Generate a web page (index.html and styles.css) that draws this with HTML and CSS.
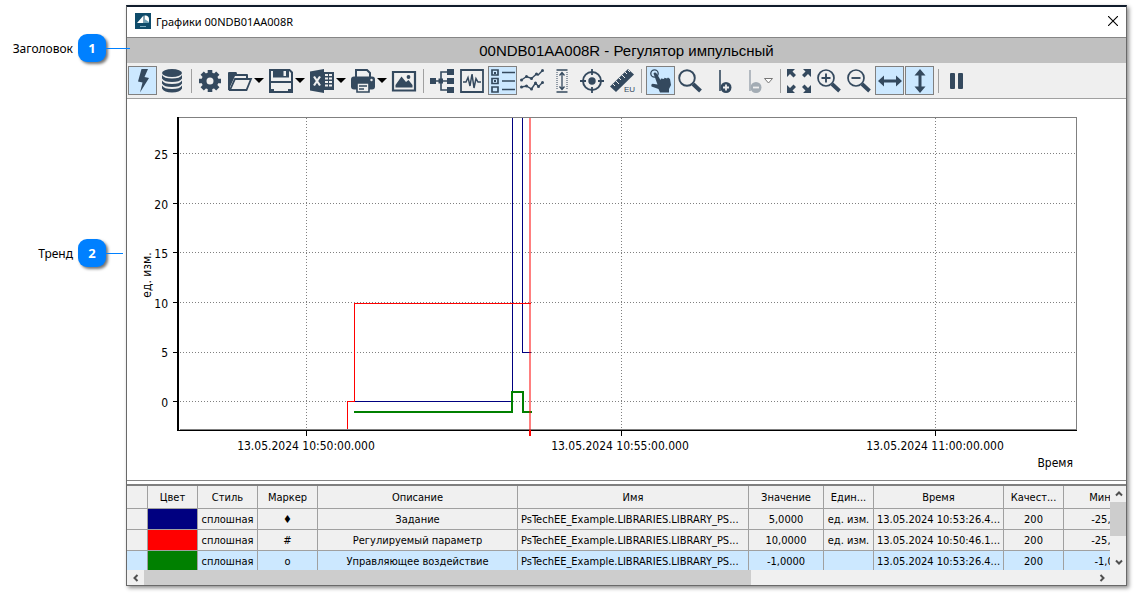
FILE: index.html
```html
<!DOCTYPE html>
<html lang="ru">
<head>
<meta charset="utf-8">
<title>Графики 00NDB01AA008R</title>
<link rel="stylesheet" href="styles.css">
</head>
<body>
<div class="page">
  <aside class="callouts">
    <div class="callout callout-header"><span class="callout-label">Заголовок</span><span class="badge">1</span><span class="leader leader-long"></span></div>
    <div class="callout callout-trend"><span class="callout-label">Тренд</span><span class="badge">2</span><span class="leader"></span></div>
  </aside>
  <main class="window">
    <header class="titlebar">
      <svg class="app-icon" viewBox="0 0 16 16"><rect width="16" height="16" fill="#0f4c6b"/><path d="M2 10L8.500 2.500V10ZM9.500 2.500H11Q14 3 14 6V10H9.500Z" fill="#fff"/><path d="M9.500 10V6L14 9V10Z" fill="#6fa3b8"/><path d="M5 13.500H11" stroke="#7fb0c4"/></svg>
      <span class="title">Графики 00NDB01AA008R</span>
      <button class="close" aria-label="Закрыть"><svg viewBox="0 0 10 10"><path d="M0 0L10 10M10 0L0 10" stroke="#000" stroke-width="1.100"/></svg></button>
    </header>
    <h1 class="heading">00NDB01AA008R - Регулятор импульсный</h1>
    <nav class="toolbar">
      <button class="tool pressed" aria-label="Онлайн"><svg class="icon" viewBox="0 0 24 24"><path d="M10.500 0H17L13.500 8L18 9L9 23.500L11.500 13.500L7 12.500Z"/></svg></button>
      <button class="tool" aria-label="Архив"><svg class="icon" viewBox="0 0 24 24"><ellipse cx="12" cy="4" rx="10" ry="4"/><path d="M2 6Q4 9.500 12 9.500T22 6V9.500Q20 13 12 13T2 9.500ZM2 11.500Q4 15 12 15T22 11.500V14.500Q20 18 12 18T2 14.500ZM2 16.500Q4 20 12 20T22 16.500V19.500Q20 23.500 12 23.500T2 19.500Z"/></svg></button>
      <i class="sep"></i>
      <button class="tool" aria-label="Настройки"><svg class="icon" viewBox="0 0 24 24"><circle cx="12" cy="12" r="6" fill="none" stroke="#34495e" stroke-width="5"/><path d="M12 1V5M12 19V23M1 12H5M19 12H23M4.200 4.200L7 7M17 17L19.800 19.800M4.200 19.800L7 17M17 7L19.800 4.200" stroke="#34495e" stroke-width="4.600" fill="none"/></svg></button>
      <button class="tool drop" aria-label="Открыть"><svg class="icon" viewBox="0 0 24 24"><path d="M0 21V4Q0 3 1 3H8Q9 3 9 5H19Q20 5 20 6V9H18V7H7L2 18V21Z"/><path d="M7 10H23L18.500 21H2Z" fill="#efefef" stroke="#34495e" stroke-width="1.800"/></svg><i class="arrow"></i></button>
      <button class="tool drop" aria-label="Сохранить"><svg class="icon" viewBox="0 0 24 24"><path d="M1 1H20.500L23 3.500V23H1Z" fill="#efefef" stroke="#34495e" stroke-width="2"/><path d="M4 0H20V8.500H4ZM1 12H23V14H1ZM1 20H5V24H1ZM19 20H23V24H19Z"/><path d="M14.500 2H17V7H14.500Z" fill="#efefef"/></svg><i class="arrow"></i></button>
      <button class="tool drop" aria-label="Экспорт в Excel"><svg class="icon" viewBox="0 0 24 24"><path d="M0 2.500L14 0V24L0 21.500ZM14 3H24V21H14Z"/><path d="M4 7.500L10 16.500M10 7.500L4 16.500" stroke="#efefef" stroke-width="2.200"/><path d="M15 5H18V7H15ZM19 5H22V7H19ZM15 8.500H18V10.500H15ZM19 8.500H22V10.500H19ZM15 12H18V14H15ZM19 12H22V14H19ZM15 15.500H18V17.500H15ZM19 15.500H22V17.500H19Z" fill="#efefef"/></svg><i class="arrow"></i></button>
      <button class="tool drop" aria-label="Печать"><svg class="icon" viewBox="0 0 24 24"><path d="M5 8V1H16L19 4V8" fill="#efefef" stroke="#34495e" stroke-width="2"/><rect y="7.500" width="24" height="13" rx="3"/><path d="M6 14H18V23H6Z" fill="#efefef" stroke="#34495e" stroke-width="1.600"/><path d="M8 17H16M8 20H13" stroke="#34495e" stroke-width="1.500"/><circle cx="20.500" cy="11" r="1.200" fill="#efefef"/></svg><i class="arrow"></i></button>
      <button class="tool" aria-label="Изображение"><svg class="icon" viewBox="0 0 24 24"><path d="M1 3H23V21.500H1Z" fill="none" stroke="#34495e" stroke-width="2.200"/><path d="M3.500 18.500V16L9.500 7.500L14 13L16.500 11L20.500 16V18.500Z"/><circle cx="16.500" cy="8" r="1.900"/></svg></button>
      <i class="sep"></i>
      <button class="tool" aria-label="Дерево"><svg class="icon" viewBox="0 0 24 24"><path d="M0 9H6V15H0ZM8.500 9.500H13V14.500H8.500ZM17 0H24V6H17ZM17 9H24V15H17ZM17 18H24V24H17Z"/><path d="M5 12H18M18 3H11V21H18" fill="none" stroke="#34495e" stroke-width="1.600"/></svg></button>
      <button class="tool" aria-label="Осциллограмма"><svg class="icon" viewBox="0 0 24 24"><path d="M1 1H23V23H1Z" fill="none" stroke="#34495e" stroke-width="1.800"/><path d="M3 13H6L8 8.500L10 17L12 5L14 19L16 9.500L18 13H21" fill="none" stroke="#34495e" stroke-width="1.500"/></svg></button>
      <button class="tool pressed" aria-label="Легенда"><svg class="icon" viewBox="0 0 24 24"><path d="M1 1H7V6H1ZM1 9.500H7V14.500H1ZM1 18H7V23H1Z" fill="none" stroke="#34495e" stroke-width="1.700"/><path d="M3 3H5V5H3ZM3 11H5V13H3Z"/><path d="M11 3.500H24M11 12H24M11 20.500H24" stroke="#34495e" stroke-width="1.500"/></svg></button>
      <button class="tool" aria-label="Графики"><svg class="icon" viewBox="0 0 24 24"><path d="M1.500 11L6.500 7.500L11.500 9.500L16.500 5L18 6L22.500 1.500M1.500 18L6.500 17L11.500 20L15.500 14L18.500 17.500L22.500 13.500" fill="none" stroke="#34495e" stroke-width="1.400"/><g><circle cx="1.500" cy="11" r="1.500"/><circle cx="6.500" cy="7.500" r="1.500"/><circle cx="11.500" cy="9.500" r="1.500"/><circle cx="16.500" cy="5" r="1.500"/><circle cx="22.500" cy="1.500" r="1.500"/><circle cx="1.500" cy="18" r="1.500"/><circle cx="6.500" cy="17" r="1.500"/><circle cx="11.500" cy="20" r="1.500"/><circle cx="15.500" cy="14" r="1.500"/><circle cx="18.500" cy="17.500" r="1.500"/><circle cx="22.500" cy="13.500" r="1.500"/></g></svg></button>
      <button class="tool" aria-label="Высота"><svg class="icon" viewBox="0 0 24 24"><path d="M6.500 1H17.500M6.500 23H17.500" stroke="#34495e" stroke-width="1.700"/><path d="M7 3V21M17 3V21" stroke="#34495e" stroke-width="1" stroke-dasharray="1 1"/><path d="M12 4V20M9.500 6.500L12 3.500L14.500 6.500M9.500 17.500L12 20.500L14.500 17.500" fill="none" stroke="#34495e" stroke-width="1.300"/></svg></button>
      <button class="tool" aria-label="Центр"><svg class="icon" viewBox="0 0 24 24"><circle cx="12" cy="12" r="9" fill="none" stroke="#34495e" stroke-width="1.900"/><circle cx="12" cy="12" r="3.700"/><path d="M12 0V6M12 18V24M0 12H6M18 12H24" stroke="#34495e" stroke-width="1.800"/></svg></button>
      <button class="tool" aria-label="Единицы"><svg class="icon" viewBox="0 0 24 24"><path d="M0 17.500L18 0L24 5.500L6 23Z"/><path d="M3 15L5 17M6 12L9 15M9 9L11 11M12 6L15 9M15 3L17 5M18 1L20 3" stroke="#efefef" stroke-width="1"/><text class="unit" x="14" y="23">EU</text></svg></button>
      <i class="sep"></i>
      <button class="tool pressed" aria-label="Курсор"><svg class="icon" viewBox="0 0 24 24"><circle cx="5.500" cy="4.500" r="3.700" fill="none" stroke="#34495e" stroke-width="1.300"/><path d="M4.500 4.500Q6 2.500 8 5L11.500 11L12 9.500L15 10L15.500 8.800L18 9.500L19 8.500L21 10L22 16L20 20V23.500H11L9.500 20L2.500 17.500Q1.500 15.500 3.500 14.800L8.500 15.500Z"/></svg></button>
      <button class="tool" aria-label="Лупа"><svg class="icon" viewBox="0 0 24 24"><circle cx="9" cy="9" r="7.800" fill="none" stroke="#34495e" stroke-width="1.900"/><path d="M15 15L22.500 22" stroke="#34495e" stroke-width="4"/></svg></button>
      <button class="tool" aria-label="Добавить линейку"><svg class="icon" viewBox="0 0 24 24"><path d="M12 1V22" stroke="#34495e" stroke-width="1.600"/><circle cx="18" cy="18.500" r="5.500"/><path d="M15 18.500H21M18 15.500V21.500" stroke="#efefef" stroke-width="1.800"/></svg></button>
      <button class="tool drop" aria-label="Удалить линейку" disabled><svg class="icon faded" viewBox="0 0 24 24"><path d="M12 1V22" stroke="#34495e" stroke-width="1.600"/><circle cx="18" cy="18.500" r="5.500"/><path d="M15 18.500H21" stroke="#efefef" stroke-width="1.800"/></svg><svg class="arrow-open" viewBox="0 0 9 6"><path d="M.5 .5H8.500L4.500 5Z" fill="#fff" stroke="#777"/></svg></button>
      <i class="sep"></i>
      <button class="tool" aria-label="Вписать"><svg class="icon" viewBox="0 0 24 24"><path d="M0 0H8L5.500 2.500L9 6L6.500 8.500L3 5L0 8ZM24 0V8L21 5L17.500 8.500L15 6L18.500 2.500L16 0ZM0 24V16L3 19L6.500 15.500L9 18L5.500 21.500L8 24ZM24 24H16L18.500 21.500L15 18L17.500 15.500L21 19L24 16Z"/></svg></button>
      <button class="tool" aria-label="Увеличить"><svg class="icon" viewBox="0 0 24 24"><circle cx="9" cy="9" r="8" fill="none" stroke="#34495e" stroke-width="1.700"/><path d="M4.500 9H13.500M9 4.500V13.500" stroke="#34495e" stroke-width="1.900"/><path d="M15 15L22.500 22" stroke="#34495e" stroke-width="3.800"/></svg></button>
      <button class="tool" aria-label="Уменьшить"><svg class="icon" viewBox="0 0 24 24"><circle cx="9" cy="9" r="8" fill="none" stroke="#34495e" stroke-width="1.700"/><path d="M4.500 9H13.500" stroke="#34495e" stroke-width="1.900"/><path d="M15 15L22.500 22" stroke="#34495e" stroke-width="3.800"/></svg></button>
      <button class="tool pressed" aria-label="По ширине"><svg class="icon" viewBox="0 0 24 24"><path d="M0 12L6 6.500V10.500H18V6.500L24 12L18 17.500V13.500H6V17.500Z"/></svg></button>
      <button class="tool pressed" aria-label="По высоте"><svg class="icon" viewBox="0 0 24 24"><path d="M12 0L17.500 6.500H13.500V17.500H17.500L12 24L6.500 17.500H10.500V6.500H6.500Z"/></svg></button>
      <i class="sep"></i>
      <button class="tool" aria-label="Пауза"><svg class="icon" viewBox="0 0 24 24"><rect x="5" y="4" width="5" height="16" rx="1"/><rect x="13" y="4" width="5" height="16" rx="1"/></svg></button>
    </nav>

    <svg class="chart" viewBox="127 99 999 381" role="img" aria-label="Тренд">
      <g class="grid">
        <path d="M180 153.500H1076M180 203.500H1076M180 252.500H1076M180 302.500H1076M180 352.500H1076M180 401.500H1076M306.500 118V429M621.500 118V429M935.500 118V429"/>
      </g>
      <g class="frame">
        <path class="frame-gray" d="M178 117.500H1076.500V429.500H180"/>
        <path class="frame-left" d="M178 117V431"/>
        <path class="frame-black" d="M177 430.500H1077M173 153.500H177M173 203.500H177M173 252.500H177M173 302.500H177M173 352.500H177M173 401.500H177M306.500 431V436M621.500 431V436M935.500 431V436"/>
      </g>
      <path class="trace blue" d="M354 401.500H512.500V118M522.500 118V352.500H531"/>
      <path class="trace red" d="M347.500 429V401.500H354.500V303.500H531"/>
      <path class="trace green" d="M354 412H512V392H523V412H532"/>
      <path class="cursor" d="M530 118V430"/>
      <path class="cursor-tick" d="M530 430V436"/>
      <g class="axis-text end">
        <text x="168" y="159">25</text><text x="168" y="209">20</text><text x="168" y="258">15</text><text x="168" y="308">10</text><text x="168" y="357">5</text><text x="168" y="407">0</text>
        <text x="1073" y="467">Время</text>
      </g>
      <g class="axis-text middle">
        <text x="306" y="450">13.05.2024 10:50:00.000</text><text x="620" y="450">13.05.2024 10:55:00.000</text><text x="935" y="450">13.05.2024 11:00:00.000</text>
        <text transform="translate(151 275) rotate(-90)">ед. изм.</text>
      </g>
    </svg>

    <section class="legend">
      <div class="legend-view">
        <table class="signals">
          <colgroup><col class="c-mark"><col class="c-color"><col class="c-style"><col class="c-style"><col class="c-desc"><col class="c-name"><col class="c-value"><col class="c-unit"><col class="c-time"><col class="c-style"><col class="c-min"></colgroup>
          <thead><tr><th></th><th>Цвет</th><th>Стиль</th><th>Маркер</th><th>Описание</th><th>Имя</th><th>Значение</th><th>Един...</th><th>Время</th><th>Качест...</th><th>Минимум</th></tr></thead>
          <tbody>
            <tr><td></td><td class="fill-navy"></td><td>сплошная</td><td>♦</td><td>Задание</td><td class="name">PsTechEE_Example.LIBRARIES.LIBRARY_PS...</td><td>5,0000</td><td>ед. изм.</td><td>13.05.2024 10:53:26.4...</td><td>200</td><td>-25,0000</td></tr>
            <tr><td></td><td class="fill-red"></td><td>сплошная</td><td>#</td><td>Регулируемый параметр</td><td class="name">PsTechEE_Example.LIBRARIES.LIBRARY_PS...</td><td>10,0000</td><td>ед. изм.</td><td>13.05.2024 10:50:46.1...</td><td>200</td><td>-25,0000</td></tr>
            <tr class="selected"><td></td><td class="fill-green"></td><td>сплошная</td><td>o</td><td>Управляющее воздействие</td><td class="name">PsTechEE_Example.LIBRARIES.LIBRARY_PS...</td><td>-1,0000</td><td></td><td>13.05.2024 10:53:26.4...</td><td>200</td><td>-1,0000</td></tr>
          </tbody>
        </table>
      </div>
      <div class="vscroll">
        <button class="sb" aria-label="Вверх"><svg viewBox="0 0 8 8"><path d="M1 5.500L4 2.500L7 5.500"/></svg></button>
        <div class="vthumb"></div>
        <button class="sb" aria-label="Вниз"><svg viewBox="0 0 8 8"><path d="M1 2.500L4 5.500L7 2.500"/></svg></button>
      </div>
    </section>
    <div class="hscroll">
      <button class="sb" aria-label="Влево"><svg viewBox="0 0 8 8"><path d="M5.500 1L2.500 4L5.500 7"/></svg></button>
      <div class="htrack"><div class="hthumb"></div></div>
      <button class="sb" aria-label="Вправо"><svg viewBox="0 0 8 8"><path d="M2.500 1L5.500 4L2.500 7"/></svg></button>
    </div>
  </main>
</div>
</body>
</html>
```
FILE: styles.css
```css
* { box-sizing: border-box; }
body { margin: 0; background: #fff; color: #000; font-family: "Noto Sans", "Open Sans", sans-serif; font-size: 12px; }
button { border: 0; padding: 0; background: none; font: inherit; color: inherit; }
.page { display: flex; padding: 5px 8px 8px 0; }
.callouts { width: 126px; flex: none; padding-top: 29px; display: flex; flex-direction: column; gap: 177px; }
.callout { height: 28px; display: flex; align-items: center; justify-content: flex-end; }
.callout-label { margin-right: 5px; }
.badge { width: 28px; height: 28px; border-radius: 9px; background: #0080ff; color: #fff; font-weight: bold; font-size: 13px; line-height: 28px; text-align: center; box-shadow: 2px 2px 3px rgba(0,0,0,.55); }
.leader { width: 17px; height: 1px; margin-right: 3px; background: #0080ff; z-index: 1; }
.leader-long { width: 24px; margin-right: -4px; }
.window { flex: 1; min-width: 0; border: 1px solid #696969; border-top: 2px solid #101c2c; background: #fff; box-shadow: 2px 2px 4px rgba(0,0,0,.45); }
.titlebar { height: 31px; display: flex; align-items: center; padding: 0 8px 2px; border-bottom: 1px solid #868686; }
.app-icon { width: 16px; height: 16px; margin-right: 5px; }
.title { flex: 1; font-size: 11px; }
.close { width: 10px; height: 10px; display: flex; }
.close svg { width: 10px; height: 10px; }
.heading { margin: 0; height: 25px; background: #c0c0c0; font: 15px/26px "Liberation Sans", Arial, sans-serif; text-align: center; }
.toolbar { height: 36px; display: flex; align-items: center; background: #efefef; border-bottom: 1px solid #a0a0a0; overflow: hidden; }
.tool { flex: none; width: 30px; height: 29px; display: flex; align-items: center; justify-content: center; border: 1px solid transparent; }
.pressed { width: 29px; margin-left: 1px; background: #cce8ff; border-color: #808080; }
.icon { width: 24px; height: 24px; fill: #34495e; flex: none; overflow: visible; }
.drop { width: 41px; justify-content: flex-start; padding-left: 2px; }
.faded { opacity: .4; }
.arrow { margin-left: 2px; border: 5px solid transparent; border-top-color: #000; border-bottom: 0; }
.arrow-open { width: 9px; height: 6px; margin-left: 2px; }
.sep { flex: none; width: 8px; height: 24px; display: flex; justify-content: center; }
.sep::before { content: ""; width: 1px; background: #a0a0a0; }
.unit { font: 8px "Liberation Sans", sans-serif; fill: #34495e; }
.chart { display: block; width: 100%; height: auto; }
.chart path { fill: none; shape-rendering: crispEdges; stroke-width: 1px; }
.grid path { stroke: #808080; stroke-dasharray: 1 2; }
.chart .frame-gray { stroke: #808080; }
.chart .frame-left { stroke: #000; stroke-width: 2px; }
.chart .frame-black { stroke: #000; }
.chart .blue { stroke: #000080; }
.chart .red { stroke: #f00; }
.chart .green { stroke: #008000; stroke-width: 2px; }
.chart .cursor { stroke: rgba(255,0,0,.5); stroke-width: 2px; }
.chart .cursor-tick { stroke: #f00; stroke-width: 2px; }
.axis-text { font: 12px "DejaVu Sans Condensed", "DejaVu Sans", sans-serif; }
.end { text-anchor: end; }
.middle { text-anchor: middle; }
.legend { border-top: 2px solid #808080; height: 86px; display: flex; background: #f0f0f0; overflow: hidden; }
.legend::before { content: none; }
.chart + .legend { margin-top: 0; }
.chart { border-bottom: 1px solid #868686; margin-bottom: 3px; box-sizing: content-box; }
.legend-view { flex: 1; min-width: 0; overflow: hidden; }
.signals { width: 1037px; table-layout: fixed; border-collapse: separate; border-spacing: 0; font: 11px/18px "DejaVu Sans Condensed", "DejaVu Sans", sans-serif; text-align: center; background: #f0f0f0; }
.signals th, .signals td { padding: 2px 0 0; font-weight: normal; white-space: nowrap; overflow: hidden; border-right: 1px solid #a0a0a0; border-bottom: 1px solid #a0a0a0; }
.signals th { height: 23px; }
.signals td { height: 21px; }
.signals .name { text-align: left; padding-left: 3px; }
.c-mark { width: 21px; }
.c-color, .c-unit { width: 50px; }
.c-style { width: 60px; }
.c-desc { width: 200px; }
.c-name { width: 231px; }
.c-value { width: 75px; }
.c-time { width: 130px; }
.c-min { width: 100px; }
.selected { background: #cce8ff; }
.fill-navy { background: #000080; }
.fill-red { background: #f00; }
.fill-green { background: #008000; }
.vscroll { width: 16px; flex: none; display: flex; flex-direction: column; background: #f0f0f0; }
.vthumb { height: 34px; margin-bottom: auto; background: #cdcdcd; }
.sb { flex: none; width: 17px; height: 16px; display: flex; align-items: center; justify-content: center; }
.sb svg { width: 8px; height: 8px; fill: none; stroke: #505050; stroke-width: 2px; }
.hscroll { display: flex; height: 15px; padding-right: 16px; background: #f0f0f0; align-items: center; }
.htrack { flex: 1; height: 15px; }
.hthumb { width: 64%; height: 15px; background: #cdcdcd; }
```
